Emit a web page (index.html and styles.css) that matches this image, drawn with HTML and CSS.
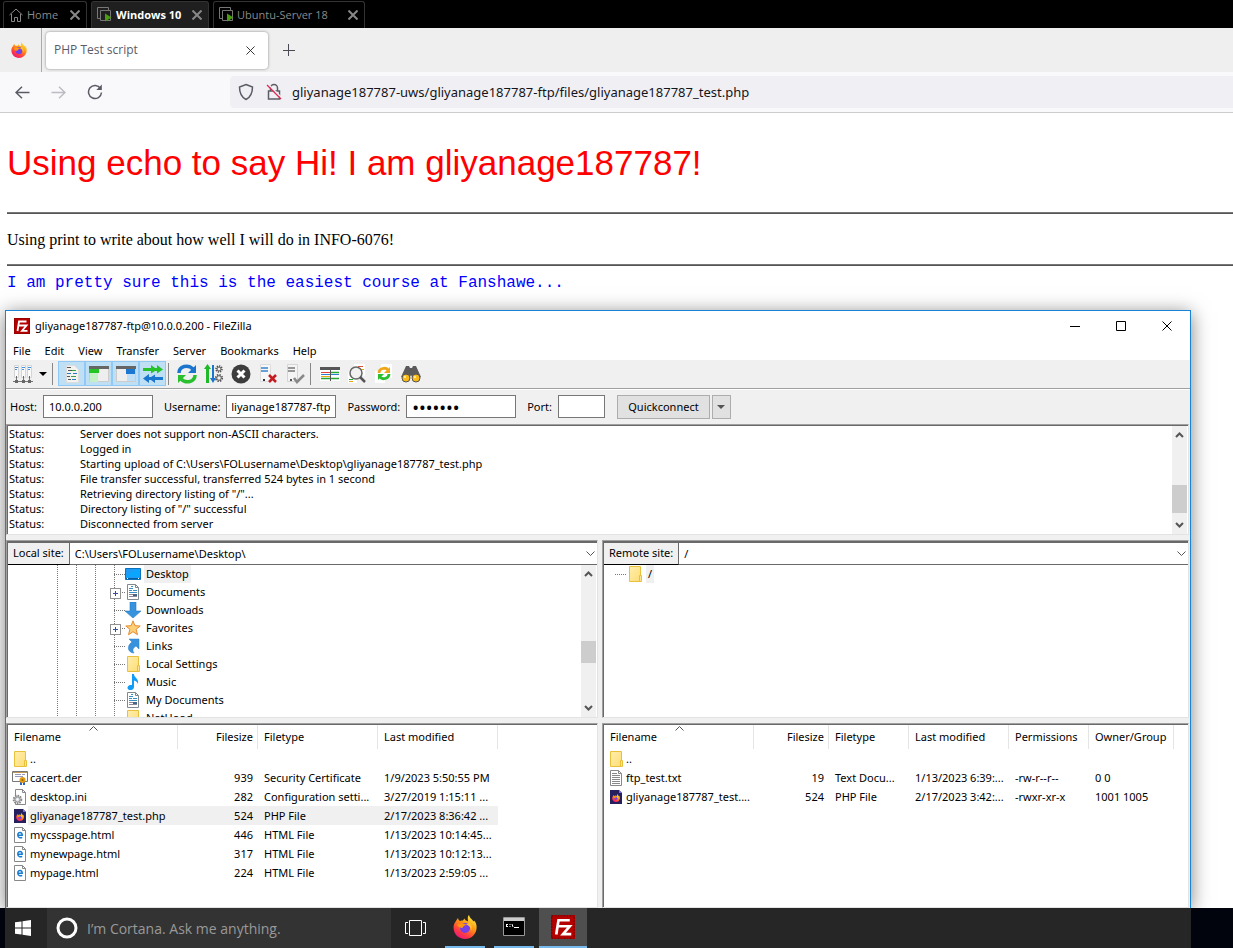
FILE: index.html
```html
<!DOCTYPE html>
<html lang="en">
<head>
<meta charset="utf-8">
<title>PHP Test script</title>
<link rel="stylesheet" href="styles.css">
</head>
<body>
<svg class="defs" aria-hidden="true">
  <defs>
    <linearGradient id="fire" x1="0.8" y1="0" x2="0.2" y2="1"><stop offset="0" stop-color="#fff44f"/><stop offset="0.4" stop-color="#ff980e"/><stop offset="0.75" stop-color="#ff3647"/><stop offset="1" stop-color="#e31587"/></linearGradient>
    <linearGradient id="gold" x1="0" y1="0" x2="1" y2="1"><stop offset="0" stop-color="#ffeeae"/><stop offset="1" stop-color="#fddd74"/></linearGradient>
    <symbol id="firefox" viewBox="0 0 24 24"><path fill="url(#fire)" d="M3 6c1-2 2-3 2-3 .3 1.500 1 2.500 2 3 1-.5 2-.5 3-.5 0 0 .5-1 1.500-2 .3 1.200 1 1.800 1.500 2 1 .4 1.500.5 2 1 0-2-.5-3 0-5 .5-1 1-1.500 1-1.500.5 3 3 4 4.500 6.500.5-.3.5-.6.5-1C23 7.500 24 10 23.500 14 22.500 20 18 24 12 24 5.500 24 .5 19 .5 12.500.5 10 1.500 8 3 6z"/><circle cx="12" cy="13" r="5" fill="#7540e8"/><path fill="#ff980e" d="M4 10c3-2 7-2 10 0-3 0-4 1.500-4.500 3-2 0-4-1-5.500-3z"/><path fill="#ffbd2f" d="M16 7c3 2 4 6 2 9 0-4-2-5-5-7 2 0 3-.5 3-2z"/></symbol>
    <symbol id="fz" viewBox="0 0 16 16"><path fill="#b50000" d="M0 0h16v16H0z"/><path fill="none" stroke="#7c0000" stroke-dasharray="1 1" d="M.5.500h15v15H.5z"/><path fill="none" stroke="#fff" stroke-width="1.800" d="M3.500 13 5 3.500h7.500M4.500 7.500H9M8.500 7.500h4L8 12.800h5.500"/></symbol>
    <symbol id="vm" viewBox="0 0 15 15"><path fill="none" stroke="#777" d="M3 11.500H.500V.5h11V3M3.500 3.500h10v10h-10z"/><path fill="#4a9c10" d="M8 6.500v8l6.500-4z"/></symbol>
    <symbol id="x" viewBox="0 0 10 10"><path fill="none" stroke="currentColor" d="m.5.5 9 9m0-9-9 9"/></symbol>
    <symbol id="folder" viewBox="0 0 16 16"><path fill="url(#gold)" stroke="#e8c03c" d="M2.500.500h11v15h-11z"/><path fill="#fbe58f" stroke="#e8c03c" d="M12.500 9.500h2v6h-2z"/></symbol>
    <symbol id="doc" viewBox="0 0 16 16"><path fill="#fff" stroke="#808890" d="M2.500.500h8l3 3v12h-11z"/><path fill="none" stroke="#808890" d="M10.500.500v3h3"/><path stroke="#3a8fc0" d="M4 4.500h4M6 2.500h2M4 6.500h3M8 6.500h4M4 8.500h8"/><path stroke="#889" d="M4 10.500h4M4 12.500h8M9 10.500h3"/><path fill="#468" d="M8 10h4v2H8z"/></symbol>
    <symbol id="down" viewBox="0 0 16 16"><path fill="#3793dd" stroke="#2a7ec4" stroke-width=".6" d="M5 0h6v9h5l-8 7-8-7h5z"/></symbol>
    <symbol id="star" viewBox="0 0 16 16"><path fill="#fcd078" stroke="#e68b30" d="m8 .8 1.900 4.900 5.300.3-4.100 3.300 1.400 5.400L8 11.700l-4.500 3 1.400-5.400L.800 6l5.300-.3z"/></symbol>
    <symbol id="link" viewBox="0 0 16 16"><path fill="#3793dd" stroke="#2a7ec4" stroke-width=".5" d="M4 1h10v10l-3-3c-3 2-4 4-2 7-6 0-8-7-2-11z"/></symbol>
    <symbol id="music" viewBox="0 0 16 16"><path fill="#119cf5" d="M7 0h2c0 4 5 4 4 10-.5-2-2-3-4-3.500V13c0 4-7 4-6.500.5C3 11 5.500 10.800 7 11z"/></symbol>
    <symbol id="desk" viewBox="0 0 16 16"><path fill="#1e9bf5" stroke="#0c72bd" d="M.5 2.500h15v11H.500z"/><path fill="#0aa5ff" d="M1 10 12 3h3v8H1z"/><path fill="#075c9c" d="M1 12h14v1H1z"/><path fill="#fff" d="M2 12h1v1H2zM13 12h1v1h-1z"/></symbol>
    <symbol id="cert" viewBox="0 0 16 16"><path fill="#fff" stroke="#777" d="M.5 1.500h15v10H.5z"/><path stroke="#c29a55" d="M1 2.500h14"/><path stroke="#99b" d="M3 4.500h6M10 4.500h3M3 6.500h8"/><path fill="#2464c8" d="M8 11h2v4H8zM11 11h2v4h-2z"/><circle cx="10.500" cy="10" r="3" fill="#e09b12"/><circle cx="10.500" cy="10" r="1" fill="#9b6503"/></symbol>
    <symbol id="ini" viewBox="0 0 16 16"><path fill="#fff" stroke="#888" d="M3.500.500h7l3 3v12h-10z"/><path fill="none" stroke="#888" d="M10.500.500v3h3"/><circle cx="5.500" cy="10.500" r="3.800" fill="#ddd" stroke="#888" stroke-width="2" stroke-dasharray="1.500 1"/><circle cx="5.500" cy="10.500" r="2.500" fill="#d8dde2" stroke="#999"/><circle cx="5.500" cy="10.500" r="1" fill="#fff"/></symbol>
    <symbol id="php" viewBox="0 0 16 16"><path fill="#26215e" d="M2 1h9l3 3v11H2z"/><path fill="#7568d8" d="M11 1v3h3z"/><use href="#firefox" x="4" y="5" width="8" height="8"/></symbol>
    <symbol id="html" viewBox="0 0 16 16"><path fill="#fff" stroke="#888" d="M2.500.500h8l3 3v12h-11z"/><path fill="none" stroke="#888" d="M10.500.500v3h3"/><path fill="none" stroke="#157ad2" stroke-width="1.500" d="M6 8.300h4.200C10.500 4.500 5.800 4.500 5.800 8c0 3 2.800 3.300 4.400 2.300"/></symbol>
    <symbol id="txt" viewBox="0 0 16 16"><path fill="#fff" stroke="#888" d="M2.500.500h8l3 3v12h-11z"/><path fill="none" stroke="#888" d="M10.500.500v3h3M4 3.500h5M4 5.500h8M4 7.500h8M4 9.500h8M4 11.500h8M4 13.500h8"/></symbol>
    <symbol id="up" viewBox="0 0 9 6"><path fill="none" stroke="#555" stroke-width="2" d="M1 5l3.500-3.500L8 5"/></symbol>
    <symbol id="dn" viewBox="0 0 9 6"><path fill="none" stroke="#555" stroke-width="2" d="M1 1l3.500 3.500L8 1"/></symbol>
    <symbol id="chev" viewBox="0 0 9 5"><path fill="none" stroke="#555" d="M.5.500l4 4 4-4"/></symbol>
    <symbol id="sort" viewBox="0 0 9 5"><path fill="none" stroke="#555" d="M.5 4.500l4-4 4 4"/></symbol>
    <symbol id="tri" viewBox="0 0 8 4"><path fill="currentColor" d="M0 0h8L4 4z"/></symbol>
  </defs>
</svg>

<nav class="vmbar" aria-label="Machines">
  <div class="vmtab"><svg width="14" height="14" viewBox="0 0 14 14"><path fill="none" stroke="#888" d="M.5 7 7 1l6.500 6M2.500 6v7.500h3V9.500h3v4h3V6"/></svg><span>Home</span><button class="vmx" aria-label="Close Home"><svg width="10" height="10"><use href="#x"/></svg></button></div>
  <div class="vmtab active"><svg width="15" height="15"><use href="#vm"/></svg><span>Windows 10</span><button class="vmx" aria-label="Close Windows 10"><svg width="10" height="10"><use href="#x"/></svg></button></div>
  <div class="vmtab wide"><svg width="15" height="15"><use href="#vm"/></svg><span>Ubuntu-Server 18</span><button class="vmx" aria-label="Close Ubuntu-Server 18"><svg width="10" height="10"><use href="#x"/></svg></button></div>
</nav>

<div class="fftabs">
  <div class="ffhome"><svg width="16" height="16"><use href="#firefox"/></svg></div>
  <div class="fftab"><span>PHP Test script</span><button class="plain" aria-label="Close tab"><svg width="9" height="9"><use href="#x"/></svg></button></div>
  <button class="plain newtab" aria-label="New tab"><svg width="12" height="12" viewBox="0 0 12 12"><path stroke="#4b4a54" d="M5.500 0v12M0 6.500h12"/></svg></button>
</div>

<div class="ffnav">
  <div class="navbtns">
    <button class="plain" aria-label="Back"><svg width="15" height="13" viewBox="0 0 15 13"><path fill="none" stroke="#5b5b66" stroke-width="1.500" d="M14.500 6.500H1M7 .800 1 6.500l6 5.700"/></svg></button>
    <button class="plain" aria-label="Forward"><svg width="15" height="13" viewBox="0 0 15 13"><path fill="none" stroke="#bcbcc2" stroke-width="1.500" d="M.5 6.500H14M8 .800l6 5.700-6 5.700"/></svg></button>
    <button class="plain" aria-label="Reload"><svg width="16" height="16" viewBox="0 0 16 16"><path fill="none" stroke="#5b5b66" stroke-width="1.500" d="M13.500 4.500A6.500 6.500 0 1 0 14.500 8.500"/><path fill="#5b5b66" d="M14.800.500V6H9.300z"/></svg></button>
  </div>
  <div class="urlbox">
    <svg width="16" height="18" viewBox="0 0 16 18"><path fill="none" stroke="#5b5b66" stroke-width="1.500" d="M8 1.500 14.500 4c0 6-1.500 10-6.500 12.500C3 14 1.500 10 1.500 4z"/></svg>
    <svg width="16" height="18" viewBox="0 0 16 18"><path fill="none" stroke="#5b5b66" stroke-width="1.500" d="M2.500 8h11v8h-11zM4.500 8V5a3.500 3.500 0 0 1 7 0v3"/><path stroke="#f0f0f4" stroke-width="1.500" d="m2.500 1.500 13 13"/><path stroke="#e22850" stroke-width="1.300" d="m1 2 14 14"/></svg>
    <input class="url" aria-label="Address" value="gliyanage187787-uws/gliyanage187787-ftp/files/gliyanage187787_test.php">
  </div>
</div>

<main class="page">
  <h1>Using echo to say Hi! I am gliyanage187787!</h1>
  <hr>
  <p class="print">Using print to write about how well I will do in INFO-6076!</p>
  <hr>
  <p class="mono">I am pretty sure this is the easiest course at Fanshawe...</p>

  <section class="win" aria-label="FileZilla">
    <header class="title">
      <svg width="16" height="16"><use href="#fz"/></svg><span>gliyanage187787-ftp@10.0.0.200 - FileZilla</span>
      <div class="winbtns">
        <button class="plain" aria-label="Minimize"><svg width="10" height="10" viewBox="0 0 10 10"><path stroke="#000" d="M0 5.500h10"/></svg></button>
        <button class="plain" aria-label="Maximize"><svg width="10" height="10" viewBox="0 0 10 10"><path fill="none" stroke="#000" d="M.5.500h9v9h-9z"/></svg></button>
        <button class="plain" aria-label="Close"><svg width="10" height="10"><use href="#x"/></svg></button>
      </div>
    </header>
    <div class="menu"><button class="plain">File</button><button class="plain">Edit</button><button class="plain">View</button><button class="plain">Transfer</button><button class="plain">Server</button><button class="plain">Bookmarks</button><button class="plain">Help</button></div>

    <div class="toolbar">
      <button class="plain tool" aria-label="Site manager"><svg width="20" height="20" viewBox="0 0 20 20"><path fill="#fafafa" stroke="#d4d4d4" d="M1.500 1.500h4v12h-4zM8.500 1.500h4v12h-4zM14.500 1.500h4v12h-4z"/><path stroke="#4a90d8" d="M2 3.500h3M9 3.500h3M15 3.500h3M2 5.500h2M9 5.500h2M15 5.500h2"/><path stroke="#777" d="M0 17.500h20M3.500 14v5M10.500 14v5M16.500 14v5"/><path fill="#666" d="M2 16h3v3H2zM9 16h3v3H9zM15 16h3v3h-3zM3 12h1v2H3zM10 12h1v2h-1zM16 12h1v2h-1z"/></svg></button>
      <button class="plain drop" aria-label="Site list"><svg width="8" height="4"><use href="#tri"/></svg></button>
      <i class="sep"></i>
      <div class="toggles">
        <button class="tool on" aria-label="Message log"><svg width="20" height="20" viewBox="0 0 20 20"><path fill="#f2f2ee" stroke="#ddd" d="M4.500 1.500h8l4 4v13h-12z"/><path stroke="#555" stroke-width="1.200" d="M5 3.500h4M6 6.500h5M5 12.500h3M6 15.500h3"/><path stroke="#35a045" d="M10 6.500h4M9 12.500h5"/><path stroke="#2878c8" stroke-width="1.200" d="M5 9.500h4M11 9.500h4M10 15.500h4"/></svg></button>
        <button class="tool on" aria-label="Local tree"><svg width="20" height="20" viewBox="0 0 20 20"><path fill="#eee" stroke="#ccc" d="M.5 2.500h19v15H.500z"/><path fill="#666" d="M0 2h20v3H0z"/><path fill="#25c425" d="M0 5h10v4H0z"/><path fill="#c4f0c8" d="M1 9h8v9H1z"/></svg></button>
        <button class="tool on" aria-label="Remote tree"><svg width="20" height="20" viewBox="0 0 20 20"><path fill="#eee" stroke="#ccc" d="M.5 2.500h19v15H.500z"/><path fill="#666" d="M0 2h20v3H0z"/><path fill="#1b77d2" d="M10 5h9v5h-9z"/><path fill="#c0def5" d="M11 10h8v7h-8z"/></svg></button>
        <button class="tool on" aria-label="Transfer queue"><svg width="20" height="20" viewBox="0 0 20 20"><path fill="#26c22b" d="M0 4h8V1l4 3h2V1l6 4.500-6 4V7h-2l-4 2.500V7H0z"/><path fill="#1a77d0" d="M20 13h-8v-2.500L8 13H6v-3l-6 4.500L6 19v-3h2l4 3v-3h8z"/></svg></button>
      </div>
      <i class="sep near"></i>
      <button class="plain tool" aria-label="Refresh"><svg width="20" height="20" viewBox="0 0 20 20"><path fill="none" stroke="#1b75cf" stroke-width="3.500" d="M2 9c0-7 9-9 14-4"/><path fill="#1b75cf" d="M19 1v8h-8z"/><path fill="none" stroke="#29bf2e" stroke-width="3.500" d="M18 11c0 7-9 9-14 4"/><path fill="#29bf2e" d="M1 19v-8h8z"/></svg></button>
      <button class="plain tool" aria-label="Process queue"><svg width="20" height="20" viewBox="0 0 20 20"><path fill="#20b928" d="M3.500 0 0 5h2v14h3V5h2z"/><path fill="#1b75cf" d="M8 1h2v13h2l-3 5-3-5h2z"/><circle cx="15" cy="5" r="3" fill="none" stroke="#555" stroke-width="1.600" stroke-dasharray="1.300 1"/><circle cx="15" cy="5" r="2" fill="none" stroke="#555"/><circle cx="15" cy="14" r="3.300" fill="none" stroke="#555" stroke-width="1.600" stroke-dasharray="1.400 1.200"/><circle cx="15" cy="14" r="2.300" fill="none" stroke="#555"/></svg></button>
      <button class="plain tool" aria-label="Cancel"><svg width="20" height="20" viewBox="0 0 20 20"><circle cx="10" cy="10" r="9.500" fill="#3d3d3d"/><path stroke="#fff" stroke-width="3" d="m6.500 6.500 7 7m0-7-7 7"/></svg></button>
      <button class="plain tool" aria-label="Disconnect"><svg width="20" height="20" viewBox="0 0 20 20"><path fill="#f7f7f7" stroke="#ddd" d="M2.500.500h10v17h-10z"/><path stroke="#3684d0" stroke-width="1.500" d="M3 4h7M3 7h7"/><path fill="#333" d="M5 15h2v2H5z"/><path stroke="#c41a20" stroke-width="2.500" d="m11 11 7 7m0-7-7 7"/></svg></button>
      <button class="plain tool" aria-label="Reconnect"><svg width="20" height="20" viewBox="0 0 20 20"><path fill="#f4f4f4" stroke="#d5d5d5" d="M2.500.500h10v17h-10z"/><path stroke="#777" stroke-width="1.500" d="M3 4h7M3 7h7"/><path fill="#555" d="M5 15h2v2H5z"/><path fill="none" stroke="#888" stroke-width="2.500" d="m9 14 3 4 7-7"/></svg></button>
      <i class="sep"></i>
      <button class="plain tool" aria-label="Filter"><svg width="20" height="20" viewBox="0 0 20 20"><path fill="#fff" d="M0 3h20v14H0z"/><path fill="#555" d="M0 3h20v3H0z"/><path stroke="#e04038" d="M1 8.500h9"/><path stroke="#3080d0" d="M1 10.500h18"/><path stroke="#26a832" stroke-width="1.500" d="M1 14.500h18M11 8.500h8"/><path stroke="#e5ad10" d="M1 12.500h9"/><path stroke="#555" d="M10.500 3v14"/></svg></button>
      <button class="plain tool" aria-label="Compare"><svg width="20" height="20" viewBox="0 0 20 20"><path fill="#fff" d="M7 0h11v12H7zM1 8h9v11H1z"/><path stroke="#e05030" d="M11 2.500h5"/><path stroke="#e5ad10" d="M13 5.500h4M2 17.500h4"/><path stroke="#29a335" d="M2 15.500h4"/><circle cx="9" cy="9" r="6" fill="#eee" fill-opacity=".8" stroke="#666" stroke-width="1.500"/><path stroke="#555" stroke-width="2.500" d="m13 13 5 5"/></svg></button>
      <button class="plain tool" aria-label="Synchronized browsing"><svg width="20" height="20" viewBox="0 0 20 20"><path fill="#fff" d="M7 0h11v14H7zM1 7h10v12H1z"/><path fill="none" stroke="#efa719" stroke-width="2.800" d="M5 9c0-5 7-6 9-3"/><path fill="#efa719" d="M16 3v6h-6z"/><path fill="none" stroke="#29bf2e" stroke-width="2.800" d="M15 10c0 5-7 6-9 3"/><path fill="#29bf2e" d="M4 16v-6h6z"/></svg></button>
      <button class="plain tool" aria-label="Find"><svg width="20" height="20" viewBox="0 0 20 20"><path fill="#5a5a5a" d="M5 2h3l1 2h2l1-2h3l5 11-8 2-2-4-2 4-8-2z"/><circle cx="5" cy="14" r="4" fill="#fbb915" stroke="#555"/><circle cx="15" cy="14" r="4" fill="#fbb915" stroke="#555"/><circle cx="4" cy="13" r="1.200" fill="#ffe78e"/><circle cx="14" cy="13" r="1.200" fill="#ffe78e"/></svg></button>
    </div>

    <form class="quick">
      <label for="host">Host:</label><input id="host" class="field host" value="10.0.0.200">
      <label for="user">Username:</label><input id="user" class="field user" dir="rtl" value="gliyanage187787-ftp">
      <label for="pass">Password:</label><input id="pass" class="field pass" type="password" value="abcdefg">
      <label for="port">Port:</label><input id="port" class="field port">
      <button type="button" class="qc">Quickconnect</button><button type="button" class="qc arrow" aria-label="Recent servers"><svg width="8" height="4"><use href="#tri"/></svg></button>
    </form>

    <div class="sunk log">
      <table class="messages">
        <tr><td class="st">Status:</td><td>Server does not support non-ASCII characters.</td></tr>
        <tr><td>Status:</td><td>Logged in</td></tr>
        <tr><td>Status:</td><td>Starting upload of C:\Users\FOLusername\Desktop\gliyanage187787_test.php</td></tr>
        <tr><td>Status:</td><td>File transfer successful, transferred 524 bytes in 1 second</td></tr>
        <tr><td>Status:</td><td>Retrieving directory listing of "/"...</td></tr>
        <tr><td>Status:</td><td>Directory listing of "/" successful</td></tr>
        <tr><td>Status:</td><td>Disconnected from server</td></tr>
      </table>
      <div class="scroll"><svg width="9" height="6"><use href="#up"/></svg><i class="space logspace"></i><i class="thumb logthumb"></i><i class="space"></i><svg width="9" height="6"><use href="#dn"/></svg></div>
    </div>

    <div class="panes">
      <div class="sunk pane">
        <div class="site"><label for="local">Local site:</label><select id="local"><option>C:\Users\FOLusername\Desktop\</option></select><svg width="9" height="5"><use href="#chev"/></svg></div>
        <div class="treebox">
          <ul class="tree">
            <li><i></i><i></i><i></i><b></b><svg width="16" height="16"><use href="#desk"/></svg><span class="sel">Desktop</span></li>
            <li><i></i><i></i><i></i><b class="plus"></b><svg width="16" height="16"><use href="#doc"/></svg><span>Documents</span></li>
            <li><i></i><i></i><i></i><b></b><svg width="16" height="16"><use href="#down"/></svg><span>Downloads</span></li>
            <li><i></i><i></i><i></i><b class="plus"></b><svg width="16" height="16"><use href="#star"/></svg><span>Favorites</span></li>
            <li><i></i><i></i><i></i><b></b><svg width="16" height="16"><use href="#link"/></svg><span>Links</span></li>
            <li><i></i><i></i><i></i><b></b><svg width="16" height="16"><use href="#folder"/></svg><span>Local Settings</span></li>
            <li><i></i><i></i><i></i><b></b><svg width="16" height="16"><use href="#music"/></svg><span>Music</span></li>
            <li><i></i><i></i><i></i><b></b><svg width="16" height="16"><use href="#doc"/></svg><span>My Documents</span></li>
            <li><i></i><i></i><i></i><b></b><svg width="16" height="16"><use href="#folder"/></svg><span>NetHood</span></li>
          </ul>
          <div class="scroll"><svg width="9" height="6"><use href="#up"/></svg><i class="space treespace"></i><i class="thumb treethumb"></i><i class="space"></i><svg width="9" height="6"><use href="#dn"/></svg></div>
        </div>
      </div>
      <div class="sunk pane">
        <div class="site"><label for="remote">Remote site:</label><select id="remote"><option>/</option></select><svg width="9" height="5"><use href="#chev"/></svg></div>
        <div class="treebox">
          <ul class="tree remote"><li><b></b><svg width="16" height="16"><use href="#folder"/></svg><span class="sel">/</span></li></ul>
        </div>
      </div>

      <div class="sunk list">
        <table class="files">
          <colgroup><col class="w170"><col class="w80"><col class="w120"><col class="w120"><col></colgroup>
          <thead><tr><th>Filename<svg class="sort" width="9" height="5"><use href="#sort"/></svg></th><th class="num">Filesize</th><th>Filetype</th><th>Last modified</th><td></td></tr></thead>
          <tbody>
            <tr><td class="name up"><svg width="16" height="16"><use href="#folder"/></svg>..</td><td></td><td></td><td></td><td></td></tr>
            <tr><td class="name"><svg width="16" height="16"><use href="#cert"/></svg>cacert.der</td><td class="num">939</td><td>Security Certificate</td><td>1/9/2023 5:50:55 PM</td><td></td></tr>
            <tr><td class="name"><svg width="16" height="16"><use href="#ini"/></svg>desktop.ini</td><td class="num">282</td><td>Configuration setti...</td><td>3/27/2019 1:15:11 ...</td><td></td></tr>
            <tr class="picked"><td class="name"><svg width="16" height="16"><use href="#php"/></svg>gliyanage187787_test.php</td><td class="num">524</td><td>PHP File</td><td>2/17/2023 8:36:42 ...</td><td></td></tr>
            <tr><td class="name"><svg width="16" height="16"><use href="#html"/></svg>mycsspage.html</td><td class="num">446</td><td>HTML File</td><td>1/13/2023 10:14:45...</td><td></td></tr>
            <tr><td class="name"><svg width="16" height="16"><use href="#html"/></svg>mynewpage.html</td><td class="num">317</td><td>HTML File</td><td>1/13/2023 10:12:13...</td><td></td></tr>
            <tr><td class="name"><svg width="16" height="16"><use href="#html"/></svg>mypage.html</td><td class="num">224</td><td>HTML File</td><td>1/13/2023 2:59:05 ...</td><td></td></tr>
          </tbody>
        </table>
      </div>
      <div class="sunk list">
        <table class="files">
          <colgroup><col class="w150"><col class="w75"><col class="w80"><col class="w100"><col class="w80"><col class="w85"><col></colgroup>
          <thead><tr><th>Filename<svg class="sort" width="9" height="5"><use href="#sort"/></svg></th><th class="num">Filesize</th><th>Filetype</th><th>Last modified</th><th>Permissions</th><th>Owner/Group</th><td></td></tr></thead>
          <tbody>
            <tr><td class="name up"><svg width="16" height="16"><use href="#folder"/></svg>..</td><td></td><td></td><td></td><td></td><td></td><td></td></tr>
            <tr><td class="name"><svg width="16" height="16"><use href="#txt"/></svg>ftp_test.txt</td><td class="num">19</td><td>Text Docu...</td><td>1/13/2023 6:39:...</td><td>-rw-r--r--</td><td>0 0</td><td></td></tr>
            <tr><td class="name"><svg width="16" height="16"><use href="#php"/></svg>gliyanage187787_test....</td><td class="num">524</td><td>PHP File</td><td>2/17/2023 3:42:...</td><td>-rwxr-xr-x</td><td>1001 1005</td><td></td></tr>
          </tbody>
        </table>
      </div>
    </div>
  </section>
</main>

<footer class="taskbar">
  <div class="tasks">
    <button class="plain start" aria-label="Start"><svg width="16" height="16" viewBox="0 0 16 16"><path fill="#fff" d="M0 2.300 6.500 1.400v6.100H0zM7.500 1.200 16 0v7.500H7.500zM0 8.500h6.500v6.100L0 13.700zM7.500 8.500H16V16l-8.500-1.200z"/></svg></button>
    <label class="search"><svg width="22" height="22" viewBox="0 0 22 22"><circle cx="11" cy="11" r="9" fill="none" stroke="#fff" stroke-width="3"/></svg><input placeholder="I’m Cortana. Ask me anything." aria-label="Search"></label>
    <button class="plain view" aria-label="Task view"><svg width="21" height="16" viewBox="0 0 21 16"><path fill="none" stroke="#fff" d="M4.500.500h12v15h-12zM3 2.500H.500v11H3M18 2.500h2.500v11H18"/></svg></button>
    <button class="plain app" aria-label="Firefox"><svg width="24" height="24"><use href="#firefox"/></svg></button>
    <button class="plain app" aria-label="Command prompt"><svg width="22" height="20" viewBox="0 0 22 20"><path fill="#000" stroke="#999" d="M.5.500h21v18H.500z"/><path fill="#ccc" d="M1 1h20v3H1z"/><path stroke="#fff" d="M3 7.500h2M3 8.500h1M3 9.500h2M7 7v1M7 9v1M9 7l1 3M11 10.500h5"/></svg></button>
    <button class="plain app current" aria-label="FileZilla window"><svg width="24" height="24"><use href="#fz"/></svg></button>
  </div>
</footer>
</body>
</html>
```

FILE: styles.css
```css
* { box-sizing: border-box; }
body { margin: 0; height: 100vh; display: flex; flex-direction: column; overflow: hidden; background: #fff; font: 11px/15px "Noto Sans", "Open Sans", sans-serif; color: #000; }
.defs { position: absolute; width: 0; height: 0; }
svg { flex: none; display: block; }
button, input, select { font: inherit; color: inherit; margin: 0; }
button, .plain { display: flex; align-items: center; justify-content: center; padding: 0; }
.plain { background: none; border: 0; }

/* Machine tabs */
.vmbar { flex: none; height: 28px; background: #000; padding: 1px 3px 0; display: flex; gap: 4px; font-family: "Open Sans", sans-serif; }
.vmtab { width: 84px; border: 1px solid #333; border-bottom: 0; border-radius: 3px 3px 0 0; display: flex; align-items: center; gap: 4px; padding: 0 6px 1px 5px; color: #8a8a8a; white-space: nowrap; }
.vmtab.active { width: 118px; background: #1f1f1f; color: #fff; font-weight: 700; }
.vmtab.wide { width: 152px; gap: 3px; }
.vmx { margin-left: auto; background: none; border: 0; color: #888; stroke-width: 2px; }

/* Browser chrome */
.fftabs { flex: none; height: 44px; background: #efefef; display: flex; align-items: center; }
.ffhome { width: 42px; height: 44px; padding-left: 11px; display: flex; align-items: center; border-right: 1px solid #aaa; }
.fftab { width: 222px; height: 37px; margin-left: 4px; padding: 0 13px 0 8px; background: #fff; border-radius: 4px; box-shadow: 0 0 3px #888; display: flex; align-items: center; justify-content: space-between; font: 12px/16px "Open Sans", sans-serif; color: #5b5b66; }
.fftab button { color: #222; }
.newtab { margin-left: 15px; }
.ffnav { flex: none; height: 41px; background: #f9f9fb; border-bottom: 1px solid #ccc; display: flex; align-items: center; }
.navbtns { width: 230px; padding-left: 15px; display: flex; gap: 21px; align-items: center; }
.urlbox { flex: 1; height: 32px; background: #f0f0f4; border-radius: 4px 0 0 4px; display: flex; align-items: center; gap: 12px; padding-left: 8px; }
.url { flex: 1; border: 0; background: none; padding: 1px 0 0; margin-left: -2px; font-size: 13px; color: #15141a; }

/* Web page */
.page { flex: 1; min-height: 0; position: relative; overflow: hidden; padding-left: 7px; }
h1 { margin: 28px 0; font: 35px/43px "Liberation Sans", Arial, sans-serif; color: #f00; }
hr { margin: 0; border: 0; height: 2px; background: #777; border-bottom: 1px solid #555; }
.print { margin: 0; padding: 17px 0 15px; font: 16px/18px "Liberation Serif", "Times New Roman", serif; }
.mono { margin: 8px 0 0; font: 16px/18px "Liberation Mono", "Courier New", monospace; color: #00f; }

/* FTP window */
.win { position: absolute; left: 5px; right: 42px; top: 197px; bottom: 0; background: #f0f0f0; border: 1px solid #1883d7; border-bottom: 0; box-shadow: 0 3px 18px rgba(0, 0, 0, .5); display: flex; flex-direction: column; }
.title { height: 30px; background: #fff; display: flex; align-items: center; gap: 5px; padding: 0 0 1px 8px; }
.winbtns { margin-left: auto; display: flex; }
.winbtns button { width: 46px; height: 29px; }
.menu { height: 19px; background: #fff; display: flex; gap: 14px; padding-left: 7px; }
.toolbar { height: 30px; display: flex; align-items: center; border-bottom: 1px solid #fff; box-shadow: inset 0 -1px #a0a0a0; padding: 0 0 2px 3px; }
.tool { width: 27px; height: 25px; }
.drop { width: 14px; }
.sep { width: 1px; height: 22px; background: #888; margin: 0 5px 0 2px; }
.sep.near { margin: 0 4px 0 2px; }
.toggles { display: flex; }
.on { background: #bfdff5; border: 1px solid #90c8f6; }
.quick { height: 34px; display: flex; align-items: center; padding: 0 0 1px 4px; }
.quick label { margin-right: 6px; }
.field { width: 110px; height: 23px; border: 1px solid #777; background: #fff; padding: 0 5px; margin-right: 11px; outline: 0; }
.field.pass { font-size: 18px; }
.field.port { width: 47px; margin-right: 12px; }
.qc { width: 93px; height: 24px; background: #e1e1e1; border: 1px solid #adadad; }
.qc.arrow { width: 19px; margin-left: 2px; color: #555; }
.sunk { background: #fff; border: 1px solid #e3e3e3; border-top-color: #a0a0a0; border-left-color: #a0a0a0; box-shadow: inset 1px 1px #696969; padding: 1px 0 0 1px; }
.log { height: 111px; margin-right: 1px; display: flex; justify-content: space-between; }
table { border-collapse: collapse; border-spacing: 0; }
.messages { align-self: flex-start; }
.messages td { padding: 0 0 0 1px; height: 15px; line-height: 15px; white-space: nowrap; }
.messages .st { width: 71px; }
.scroll { width: 15px; margin-right: 1px; background: #f0f0f0; display: flex; flex-direction: column; align-items: center; padding: 6px 0; }
.space { flex: 1; }
.logspace { flex: 5; }
.treespace { flex: 6; }
.treespace + .thumb + .space { flex: 4; }
.thumb { width: 15px; background: #cdcdcd; }
.logthumb { height: 28px; }
.treethumb { height: 22px; }
.panes { flex: 1; min-height: 0; margin: 5px 1px 0 0; display: grid; grid-template-columns: 592fr 587fr; grid-template-rows: 178px 1fr; gap: 5px 4px; }
.pane { display: flex; flex-direction: column; min-height: 0; }
.site { height: 23px; display: flex; align-items: center; border-top: 1px solid #696969; border-bottom: 1px solid #696969; padding-right: 2px; }
.site label { height: 22px; line-height: 20px; padding: 0 5px; background: #f0f0f0; border-right: 1px solid #696969; border-bottom: 1px solid #000; }
.site select { flex: 1; min-width: 0; appearance: none; border: 0; background: none; padding: 0 5px 1px; outline: 0; }
.treebox { flex: 1; min-height: 0; display: flex; justify-content: space-between; overflow: hidden; }
.tree { list-style: none; margin: 0; padding: 0 0 0 49px; }
.tree.remote { padding-left: 11px; }
.tree li { height: 18px; display: flex; align-items: center; }
.tree i, .tree b { height: 18px; background: repeating-linear-gradient(#777 0 1px, transparent 1px 2px) 0 0 / 1px 100% no-repeat; }
.tree i { width: 19px; }
.tree b { position: relative; width: 11px; }
.tree.remote b { background: none; width: 12px; }
.tree b::before { content: ""; position: absolute; left: 0; right: 0; top: 9px; height: 1px; background: repeating-linear-gradient(90deg, #777 0 1px, transparent 1px 2px); }
.tree .plus::after { content: ""; position: absolute; left: -4px; top: 5px; width: 9px; height: 9px; border: 1px solid #919191; background: linear-gradient(#3450a0, #3450a0) center / 5px 1px no-repeat, linear-gradient(#3450a0, #3450a0) center / 1px 5px no-repeat, #fff; }
.tree span { height: 18px; line-height: 18px; margin-left: 3px; padding: 0 2px; }
.sel { background: #f0f0f0; }
.list { min-width: 0; overflow: hidden; }
.files { width: 100%; table-layout: fixed; }
.files th, .files td { padding: 0 5px 0 6px; text-align: left; font-weight: 400; white-space: nowrap; overflow: hidden; }
.files th { position: relative; height: 24px; padding-bottom: 1px; box-shadow: inset -1px 0 #e5e5e5; }
.files td { height: 19px; line-height: 18px; }
.files .num { text-align: right; }
.files .name { padding: 0 0 0 22px; }
.name svg { float: left; margin: 1px 2px 0 -18px; }
.sort { position: absolute; left: calc(50% - 4px); top: 1px; }
.picked td { background: #f0f0f0; }
.picked td:last-child { background: none; }
.picked .name { background: linear-gradient(#f0f0f0, #f0f0f0) 20px 0 no-repeat; }
.w170 { width: 170px; }
.w150 { width: 150px; }
.w120 { width: 120px; }
.w100 { width: 100px; }
.w85 { width: 85px; }
.w80 { width: 80px; }
.w75 { width: 75px; }

/* Taskbar */
.taskbar { flex: none; height: 40px; background: #01040c; padding: 0 42px 0 5px; }
.tasks { height: 40px; background: #262626; display: flex; }
.start { width: 42px; padding-right: 6px; }
.search { width: 344px; background: #333; display: flex; align-items: center; gap: 9px; padding-left: 9px; }
.search input { flex: 1; min-width: 0; border: 0; padding: 2px 0 0; background: none; outline: 0; font: 14px/20px "Open Sans", sans-serif; color: #fff; }
.search input::placeholder { color: #999; opacity: 1; }
.view { width: 48px; margin-right: 6px; }
.app { width: 40px; margin-right: 9px; border-bottom: 2px solid #76b9ed; }
.app.current { width: 48px; margin-left: -4px; background: #4f4f4f; }
```
